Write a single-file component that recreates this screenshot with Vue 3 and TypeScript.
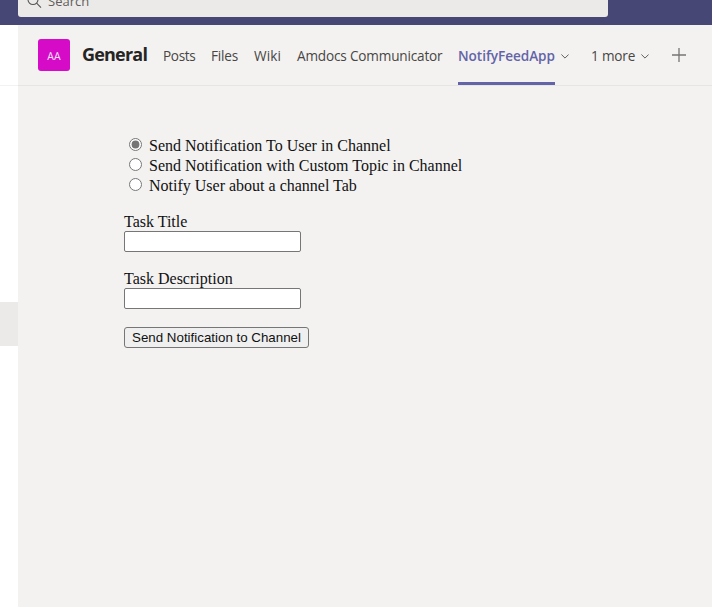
<script setup lang="ts">
import { ref } from 'vue'

interface Tab {
  id: string
  label: string
}

const tabs: Tab[] = [
  { id: 'posts', label: 'Posts' },
  { id: 'files', label: 'Files' },
  { id: 'wiki', label: 'Wiki' },
  { id: 'amdocs', label: 'Amdocs Communicator' },
]

const modes: string[] = [
  'Send Notification To User in Channel',
  'Send Notification with Custom Topic in Channel',
  'Notify User about a channel Tab',
]

const mode = ref<number>(0)
const title = ref<string>('')
const description = ref<string>('')
</script>

<template>
  <div class="window">
    <div class="topbar">
      <div class="search">
        <svg class="search-icon" width="16" height="16" viewBox="0 0 16 16">
          <circle cx="6" cy="5.5" r="5" />
          <path d="M9.6 9.2L14 13.6" />
        </svg>
        <span class="search-text">Search</span>
      </div>
    </div>
    <div class="body">
      <aside class="rail"><div class="rail-item"></div></aside>
      <main class="main">
        <header class="header">
          <div class="avatar">AA</div>
          <h1 class="channel">General</h1>
          <nav class="tabs">
            <a v-for="t in tabs" :key="t.id" class="tab" :class="t.id">{{ t.label }}</a>
            <a class="tab active">NotifyFeedApp</a>
            <svg class="chevron" width="8" height="5" viewBox="0 0 8 5"><path d="M.4 .5L4 4.1L7.6 .5" /></svg>
            <a class="tab more">1 more</a>
            <svg class="chevron" width="8" height="5" viewBox="0 0 8 5"><path d="M.4 .5L4 4.1L7.6 .5" /></svg>
            <svg class="plus" width="14" height="14" viewBox="0 0 14 14"><path d="M7 0V14M0 7H14" /></svg>
          </nav>
        </header>
        <form class="form" @submit.prevent>
          <div class="modes">
            <label v-for="(m, i) in modes" :key="m" class="mode">
              <input v-model="mode" type="radio" name="mode" :value="i" />
              <span>{{ m }}</span>
            </label>
          </div>
          <label class="field">
            <span>Task Title</span>
            <input v-model="title" type="text" />
          </label>
          <label class="field">
            <span>Task Description</span>
            <input v-model="description" type="text" />
          </label>
          <button class="send" type="submit">Send Notification to Channel</button>
        </form>
      </main>
    </div>
  </div>
</template>

<style>
body {
  margin: 0;
  overflow: hidden;
}
</style>

<style scoped>
.window {
  display: flex;
  flex-direction: column;
  height: 607px;
  overflow: hidden;
  background: #fff;
  font-family: 'Open Sans', 'Noto Sans', sans-serif;
  color: #484644;
}
.topbar {
  flex: none;
  height: 25px;
  padding-left: 18px;
  background: #464775;
}
.search {
  display: flex;
  box-sizing: border-box;
  width: 590px;
  height: 17px;
  padding-left: 9px;
  border-radius: 0 0 3px 3px;
  background: #ebeae8;
}
.search-icon {
  flex: none;
  margin-top: -6px;
  fill: none;
  stroke: #555;
  stroke-width: 1.1;
}
.search-text {
  margin: -8px 0 0 5px;
  font-size: 13px;
  line-height: 19px;
  color: #605e5c;
}
.body {
  display: flex;
  flex: 1;
}
.rail {
  flex: none;
  box-sizing: border-box;
  width: 18px;
  padding-top: 60px;
}
.rail-item {
  height: 44px;
  padding-top: 216px;
  border-top: 1px solid #f3f2f1;
  background: #ebeae8 content-box;
}
.main {
  flex: 1;
  background: #f3f2f1;
}
.header {
  display: flex;
  box-sizing: border-box;
  height: 61px;
  padding-left: 20px;
  border-bottom: 1px solid #e6e5e4;
}
.avatar {
  width: 32px;
  height: 32px;
  margin-top: 14px;
  border-radius: 3px;
  background: #d60bc8;
  color: #fbe3f9;
  font-size: 10.5px;
  line-height: 34px;
  text-align: center;
}
.channel {
  width: 65px;
  margin: 17px 0 0 12px;
  font-size: 18px;
  line-height: 25px;
  font-weight: 700;
  letter-spacing: -0.8px;
  color: #252423;
  white-space: nowrap;
}
.tabs {
  display: flex;
  margin-left: 16px;
}
.tab {
  box-sizing: border-box;
  height: 60px;
  margin-right: 16px;
  font-size: 13.6px;
  line-height: 62px;
  letter-spacing: -0.18px;
  white-space: nowrap;
}
.posts {
  width: 32px;
  letter-spacing: -0.35px;
}
.files {
  width: 27px;
}
.wiki {
  width: 27px;
  letter-spacing: 0.1px;
}
.amdocs {
  width: 145px;
}
.active {
  width: 97px;
  margin-right: 6px;
  border-bottom: 3px solid #6264a7;
  font-weight: 600;
  letter-spacing: -0.05px;
  color: #6264a7;
}
.more {
  width: 44px;
  margin: 0 6px 0 22px;
}
.chevron {
  margin-top: 29px;
  fill: none;
  stroke: #605e5c;
}
.plus {
  margin: 23px 0 0 23px;
  fill: none;
  stroke: #777573;
  stroke-width: 1.3;
}
.form {
  padding: 50px 0 0 106px;
  font-family: 'Liberation Serif', serif;
  font-size: 16px;
  color: #111;
}
.modes {
  margin-bottom: 17px;
}
.mode {
  display: flex;
  height: 20px;
  line-height: 20px;
}
.mode input {
  width: 13px;
  height: 13px;
  margin: 2px 7px 0 5px;
  accent-color: #757575;
}
.field {
  display: flex;
  flex-direction: column;
  align-items: flex-start;
  height: 57px;
  line-height: 18px;
}
.field input {
  box-sizing: border-box;
  width: 177px;
  height: 21px;
  padding: 1px 2px;
  border: 1px solid #767676;
  border-radius: 2px;
  background: #fff;
}
.send {
  display: block;
  box-sizing: border-box;
  width: 185px;
  height: 21px;
  padding: 0;
  border: 1px solid #767676;
  border-radius: 3px;
  background: #efefef;
  font-family: 'Liberation Sans', sans-serif;
  font-size: 13.333px;
  line-height: 19px;
  color: #111;
  white-space: nowrap;
}
</style>
